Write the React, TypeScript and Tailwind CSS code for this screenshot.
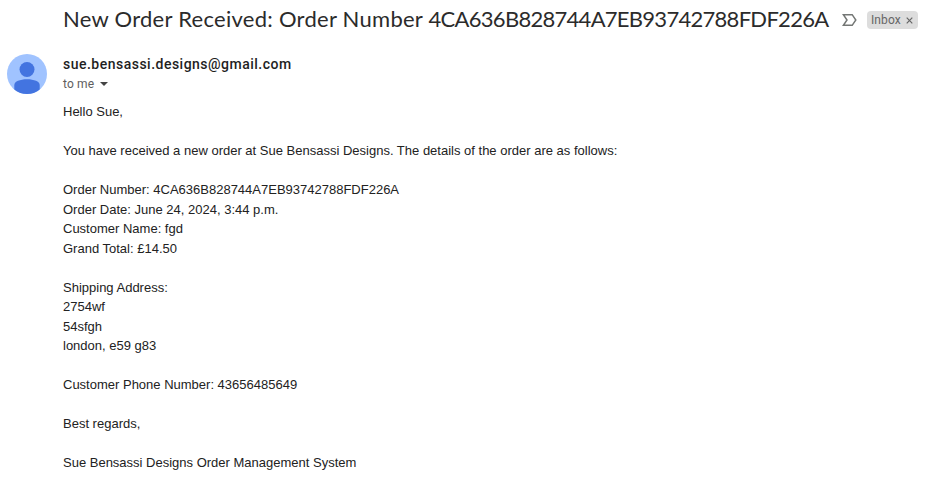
import React from "react";

const body = [
  "Hello Sue,", "",
  "You have received a new order at Sue Bensassi Designs. The details of the order are as follows:", "",
  "Order Number: 4CA636B828744A7EB93742788FDF226A",
  "Order Date: June 24, 2024, 3:44 p.m.",
  "Customer Name: fgd",
  "Grand Total: £14.50", "",
  "Shipping Address:", "2754wf", "54sfgh", "london, e59 g83", "",
  "Customer Phone Number: 43656485649", "",
  "Best regards,", "",
  "Sue Bensassi Designs Order Management System",
];

export default function App() {
  return (
    <main className="h-[480px] w-[944px] overflow-hidden bg-white font-['Liberation_Sans',Arial,sans-serif] text-[#222]">
      <header className="flex h-10 items-center pl-[63px]">
        <h1 className="w-[766px] whitespace-nowrap pb-[2px] font-['Lato',sans-serif] text-[22px] leading-7 text-[#2b2b2b]">
          <span className="tracking-[0.27px]">New Order Received: Order Number </span>
          <span className="tracking-[-0.72px]">4CA636B828744A7EB93742788FDF226A</span>
        </h1>
        <svg className="ml-[13px] shrink-0" width="16" height="14" viewBox="0 0 16 14" fill="none" stroke="#747775" strokeWidth="1.5">
          <path d="M1.4 1.7H10.2L13.8 7L10.2 12.3H1.4L5 7Z" />
        </svg>
        <div className="ml-[9px] flex h-[18px] w-[51px] shrink-0 items-center rounded bg-[#ddd] pl-1 font-['Roboto',sans-serif] text-xs tracking-[0.1px] text-[#666]">
          Inbox
          <svg className="ml-[5px] mt-px" width="7" height="7" viewBox="0 0 7 7" fill="none" stroke="#666" strokeWidth="1.2"><path d="M.7 .7L6.3 6.3M6.3 .7L.7 6.3" /></svg>
        </div>
      </header>
      <section className="flex h-[62px] pl-[7px] pt-[14px]">
        <svg width="40" height="40" viewBox="0 0 40 40">
          <circle cx="20" cy="20" r="20" fill="#a0c3ff" />
          <circle cx="20" cy="15.5" r="7.5" fill="#4374e0" />
          <path d="M7.3 35.4V31C7.3 27.5 13 25.3 20 25.3S32.7 27.5 32.7 31V35.4A20 20 0 0 1 7.3 35.4Z" fill="#4374e0" />
        </svg>
        <div className="ml-4 font-['Roboto',sans-serif]">
          <p className="text-[14px] font-medium leading-5 tracking-[0.49px] text-[#1f1f1f]">sue.bensassi.designs@gmail.com</p>
          <p className="flex items-center text-xs leading-5 tracking-[0.15px] text-[#5e5e5e]">
            to me
            <svg className="ml-[6px]" width="8" height="4" viewBox="0 0 8 4" fill="#444"><path d="M0 0H8L4 4Z" /></svg>
          </p>
        </div>
      </section>
      <article className="pl-[63px] text-[13px] leading-[19.5px]">
        {body.map((line, i) => <p key={i} className="h-[19.5px] whitespace-nowrap">{line}</p>)}
      </article>
    </main>
  );
}
